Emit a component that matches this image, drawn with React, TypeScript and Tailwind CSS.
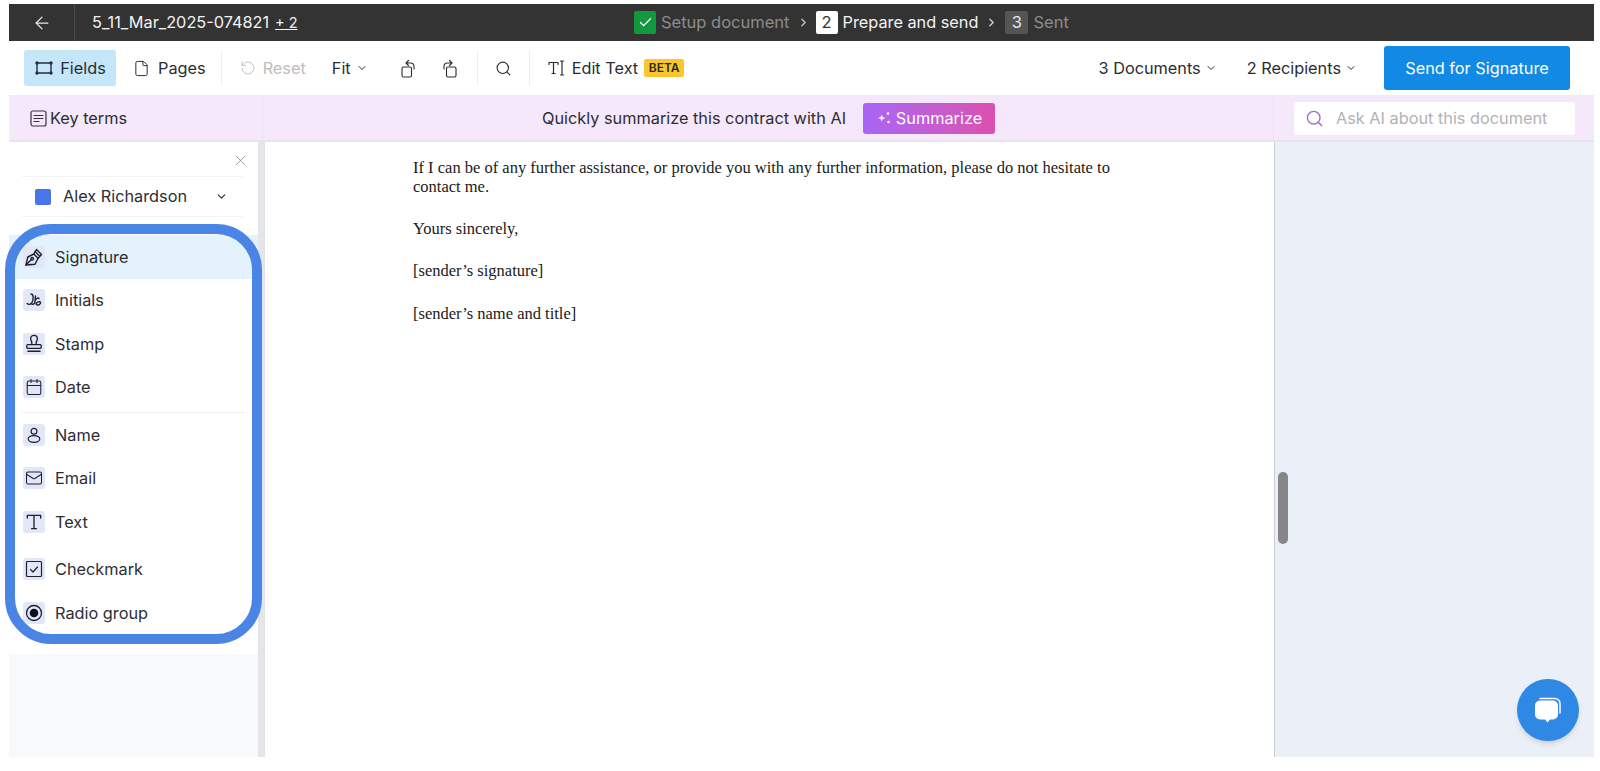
import React from "react";
import { ArrowLeft, Check, ChevronDown, ChevronRight, File, Search, RotateCw, X, Calendar, Mail } from "lucide-react";

const IconBox = ({ children }: { children: React.ReactNode }) => (
  <span className="w-[22px] h-[22px] rounded-[3px] bg-[#e2e7f8] flex items-center justify-center text-[#1d2030] shrink-0">{children}</span>
);

const svgProps = { fill: "none", stroke: "currentColor", strokeWidth: 1.4, strokeLinecap: "round" as const, strokeLinejoin: "round" as const };

const PenIcon = () => (
  <svg width="20" height="20" viewBox="0 0 20 20" {...svgProps}>
    <path d="M2 18l1.800-8 6-3 4.200 4.200-3 6z" />
    <path d="M9.800 7L12.500 2.500 17.500 7.500 14 11.200" />
    <path d="M2 18l5.200-5.200" />
    <circle cx="8.200" cy="11.800" r="1.300" />
    <path d="M11 4.500l4.500 4.500" />
  </svg>
);
const InitialsIcon = () => (
  <svg width="18" height="18" viewBox="0 0 18 18" {...svgProps}>
    <path d="M6 3c3 0 2.500 6 1 8.500C6 13.500 3.500 14 2.200 12.500" />
    <path d="M6 12.500c2 1.500 3.500.5 4-1.500L10.500 5" />
    <path d="M10.500 9c1-2 3-2.500 3.500-1.500M11 13c.5-2 4-3 4.500-1.500S13 15 11.500 13.500" />
  </svg>
);
const StampIcon = () => (
  <svg width="20" height="20" viewBox="0 0 18 18" {...svgProps} strokeWidth={1.2}>
    <path d="M7 9.500V7.500C7 6.500 6 6 6 4.200a3 3 0 0 1 6 0C12 6 11 6.500 11 7.500v2" />
    <rect x="2.500" y="9.500" width="13" height="3.500" rx="1" />
    <path d="M3.500 15.500h11" />
  </svg>
);
const UserIcon = () => (
  <svg width="18" height="18" viewBox="0 0 18 18" {...svgProps} strokeWidth={1.2}>
    <circle cx="9" cy="5.200" r="2.900" />
    <ellipse cx="9" cy="13" rx="5.800" ry="3.400" />
  </svg>
);
const SerifT = ({ size = 18 }: { size?: number }) => (
  <svg width={size} height={size} viewBox="0 0 18 18" {...svgProps} strokeWidth={1.2}>
    <path d="M3 5.500V3h12v2.500M9 3v12M6.800 15h4.400" />
  </svg>
);
const CheckBoxIcon = () => (
  <svg width="18" height="18" viewBox="0 0 18 18" {...svgProps} strokeWidth={1.2}>
    <rect x="1.500" y="1.500" width="15" height="15" rx="1" />
    <path d="M5.500 9.500l2.500 2.500 4.500-5" />
  </svg>
);
const RadioIcon = () => (
  <svg width="18" height="18" viewBox="0 0 18 18">
    <circle cx="9" cy="9" r="7.500" fill="none" stroke="currentColor" strokeWidth="1.3" />
    <circle cx="9" cy="9" r="4.300" fill="#0b0d17" />
  </svg>
);
const FieldsIcon = () => (
  <svg width="20" height="14" viewBox="0 0 20 14" {...svgProps} stroke="#26303c">
    <path d="M3 2h14M3 12h14M3 2v10M17 2v10" />
    <circle cx="3" cy="2" r="1" fill="#26303c" />
    <circle cx="17" cy="2" r="1" fill="#26303c" />
    <circle cx="3" cy="12" r="1" fill="#26303c" />
    <circle cx="17" cy="12" r="1" fill="#26303c" />
  </svg>
);
const RotateLeftIcon = () => (
  <svg width="15" height="19" viewBox="0 0 15 19" {...svgProps} strokeWidth={1.1}>
    <rect x="1" y="8" width="9.500" height="10" rx="1.500" />
    <path d="M5.500 4h4a3.500 3.500 0 0 1 3.500 3.500V10M7.500 1.500L5 4l2.500 2.500" />
  </svg>
);
const RotateRightIcon = () => (
  <svg width="15" height="19" viewBox="0 0 15 19" {...svgProps} strokeWidth={1.1}>
    <rect x="4.500" y="8" width="9.500" height="10" rx="1.500" />
    <path d="M9.500 4h-4A3.500 3.500 0 0 0 2 7.500V10M7.500 1.500L10 4 7.500 6.500" />
  </svg>
);
const EditTextIcon = () => (
  <svg width="18" height="18" viewBox="0 0 18 18" {...svgProps} strokeWidth={1.2} stroke="#2a2d33">
    <path d="M1 5.500V3.500h9v2M5.500 3.500v11M4 14.500h3M12.500 2h3M12.500 16h3M14 2v14" />
  </svg>
);
const KeyIcon = () => (
  <svg width="17" height="17" viewBox="0 0 17 17" {...svgProps} strokeWidth={1.2} stroke="#3a3045">
    <rect x="1" y="1" width="15" height="15" rx="2" />
    <path d="M4 5.500h9M4 8.500h9M4 11.500h5" />
  </svg>
);
const Sparkle = () => (
  <svg width="16" height="16" viewBox="0 0 14 14" fill="#fff">
    <path d="M5 3.500C5.400 6 6 6.600 8.500 7 6 7.400 5.400 8 5 10.500 4.600 8 4 7.400 1.500 7 4 6.600 4.600 6 5 3.500z" />
    <circle cx="10.500" cy="3" r="1.100" />
    <circle cx="11" cy="10.500" r="1.100" />
  </svg>
);
const ChatIcon = () => (
  <svg width="34" height="34" viewBox="0 0 34 34">
    <path d="M9 5.500h15a5 5 0 0 1 5 5V20" fill="none" stroke="#fff" strokeWidth="1.500" strokeLinecap="round" />
    <path d="M9 7.500h13a5 5 0 0 1 5 5v9a5 5 0 0 1-5 5h-3l-2.500 3-2.500-3H9a5 5 0 0 1-5-5v-9a5 5 0 0 1 5-5z" fill="#fff" />
  </svg>
);

const Divider = ({ className }: { className: string }) => <span className={`w-px h-[36px] bg-[#eceef1] shrink-0 ${className}`} />;

const Field = ({ icon, label, className = "" }: { icon: React.ReactNode; label: string; className?: string }) => (
  <div className={`h-[43.500px] flex items-center pl-[14px] gap-[10px] text-[16.300px] text-[#2c2e33] ${className}`}>
    <IconBox>{icon}</IconBox>
    <span>{label}</span>
  </div>
);

export default function App() {
  return (
    <div className="w-[1600px] h-[771px] overflow-hidden bg-white pt-1 pl-[9px] pr-[6px] pb-[14px] flex flex-col font-['Inter',sans-serif] relative">
      {/* Dark bar */}
      <header className="h-[37px] shrink-0 bg-[#333333] flex items-center text-white">
        <div className="w-[66px] h-full border-r border-[#4a4a4a] flex items-center justify-center pl-[1px]">
          <ArrowLeft size={20} strokeWidth={1.5} className="text-[#e8e8e8]" />
        </div>
        <div className="ml-[17px] w-[542px] flex items-center text-[16.300px] text-[#f2f2f2] whitespace-nowrap">
          5_11_Mar_2025-074821<span className="underline ml-[6px] text-[14.500px]">+ 2</span>
        </div>
        <span className="w-[22px] h-[23px] bg-[#12983f] rounded-[2px] flex items-center justify-center">
          <Check size={15} strokeWidth={2} className="text-white" />
        </span>
        <span className="ml-[5px] text-[16.500px] text-[#8c8c8c] whitespace-nowrap">Setup document</span>
        <ChevronRight size={13} strokeWidth={2.4} className="ml-[7px] text-[#c4c4c4]" />
        <span className="ml-[6px] w-[22px] h-[23px] bg-white rounded-[2px] flex items-center justify-center text-[#333] text-[16.500px]">2</span>
        <span className="ml-[5px] text-[16.300px] text-[#f2f2f2] whitespace-nowrap">Prepare and send</span>
        <ChevronRight size={13} strokeWidth={2.4} className="ml-[7px] text-[#d5d5d5]" />
        <span className="ml-[7px] w-[23px] h-[23px] bg-[#555555] rounded-[2px] flex items-center justify-center text-[#e8e8e8] text-[16.500px]">3</span>
        <span className="ml-[5px] text-[16.500px] text-[#8c8c8c]">Sent</span>
      </header>

      {/* Toolbar */}
      <div className="h-[54px] shrink-0 bg-white flex items-center text-[16.300px] text-[#2a2d33] whitespace-nowrap">
        <button className="ml-[15px] w-[92px] h-[36px] rounded-[3px] bg-[#c5e5f8] flex items-center justify-center gap-[6px]">
          <FieldsIcon />
          <span>Fields</span>
        </button>
        <span className="ml-[17px] flex items-center gap-[8px]">
          <File size={17} strokeWidth={1.4} />
          <span>Pages</span>
        </span>
        <Divider className="ml-[15px]" />
        <span className="ml-[18px] flex items-center gap-[7px] text-[#bdbdbd]">
          <RotateCw size={16} strokeWidth={1.4} className="-scale-x-100" />
          <span>Reset</span>
        </span>
        <span className="ml-[26px] flex items-center gap-[5px]">
          Fit <ChevronDown size={12} strokeWidth={2} />
        </span>
        <span className="ml-[33px]"><RotateLeftIcon /></span>
        <span className="ml-[26px]"><RotateRightIcon /></span>
        <Divider className="ml-[20px]" />
        <Search size={17} strokeWidth={1.6} className="ml-[17px]" />
        <Divider className="ml-[17px]" />
        <span className="ml-[18px]"><EditTextIcon /></span>
        <span className="ml-[6px]">Edit Text</span>
        <span className="ml-[6px] w-[40px] h-[18px] rounded-[2px] bg-[#fbc62d] text-[12px] font-semibold text-[#2a2a1a] flex items-center justify-center">BETA</span>
        <span className="ml-auto flex items-center gap-[4px]">
          3 Documents <ChevronDown size={12} strokeWidth={2} />
        </span>
        <span className="ml-[30px] flex items-center gap-[4px]">
          2 Recipients <ChevronDown size={12} strokeWidth={2} />
        </span>
        <button className="ml-[27px] mr-[24px] w-[186px] h-[44px] rounded-[3px] bg-[#1289e4] text-white">Send for Signature</button>
      </div>

      {/* AI bar */}
      <div className="h-[47px] shrink-0 pt-[1px] bg-[#f4e8fa] border-b-2 border-[#e6e3ea] flex items-center text-[16.300px] text-[#2f2d33] whitespace-nowrap">
        <div className="w-[254px] h-full border-r border-[#ebe2f0] flex items-center pl-[21px] gap-[3px]">
          <KeyIcon />
          <span>Key terms</span>
        </div>
        <div className="ml-[279px] flex items-center">
          <span>Quickly summarize this contract with AI</span>
          <button className="ml-[17px] w-[132px] h-[31px] rounded-[3px] bg-gradient-to-r from-[#a865f5] to-[#dc4fb0] text-white flex items-center justify-center gap-[4px]">
            <Sparkle />
            <span>Summarize</span>
          </button>
        </div>
        <div className="ml-auto w-[321px] h-full border-l border-[#ebe2f0] flex items-center pl-[20px]">
          <div className="w-[281px] h-[33px] bg-white rounded-[3px] flex items-center pl-[11px] gap-[12px] text-[#b2b2b6]">
            <Search size={19} strokeWidth={1.8} className="text-[#9a6fd0]" />
            <span>Ask AI about this document</span>
          </div>
        </div>
      </div>

      {/* Main */}
      <div className="flex-1 min-h-0 flex">
        {/* Sidebar */}
        <aside className="w-[249px] shrink-0 bg-white flex flex-col">
          <div className="h-[81px] shrink-0 relative pl-[13px] pt-[34px]">
            <X size={17} strokeWidth={1.2} className="absolute right-[9px] top-[10px] text-[#8f8f8f]" />
            <div className="w-[221px] h-[41px] border-y border-[#f3f4f6] flex items-center pl-[13px] text-[16.300px] text-[#2c2e33]">
              <span className="w-[16px] h-[16px] rounded-[2px] bg-[#4a74ea]" />
              <span className="ml-[12px]">Alex Richardson</span>
              <ChevronDown size={13} strokeWidth={2} className="ml-[28px]" />
            </div>
          </div>
          <div className="relative">
            <div className="absolute -left-[4px] -right-[4px] top-[1px] -bottom-[9px] border-[10px] border-[#4a84e4] rounded-[46px] z-10" />
            <div className="bg-white pt-[12px]">
              <Field icon={<PenIcon />} label="Signature" className="bg-[#e3f2fd]" />
              <Field icon={<InitialsIcon />} label="Initials" />
              <Field icon={<StampIcon />} label="Stamp" />
              <Field icon={<Calendar size={18} strokeWidth={1.4} />} label="Date" />
              <div className="h-[4px] mx-[13px] border-b border-[#f0f1f3]" />
              <Field icon={<UserIcon />} label="Name" />
              <Field icon={<Mail size={18} strokeWidth={1.4} />} label="Email" />
              <Field icon={<SerifT size={20} />} label="Text" />
              <div className="h-[4px]" />
              <Field icon={<CheckBoxIcon />} label="Checkmark" />
              <Field icon={<RadioIcon />} label="Radio group" />
            </div>
          </div>
          <div className="flex-1 mt-[19px] bg-[#f8f9fb]" />
        </aside>
        <div className="w-[7px] shrink-0 bg-[#e4e5e8]" />

        {/* Document */}
        <main className="w-[1009px] shrink-0 bg-white pl-[148px] pt-[16px] font-['Liberation_Serif',serif] text-[16.500px] leading-[19px] text-[#1a1a1a]">
          <p className="w-[710px]">If I can be of any further assistance, or provide you with any further information, please do not hesitate to contact me.</p>
          <p className="mt-[23px]">Yours sincerely,</p>
          <p className="mt-[23px]">[sender’s signature]</p>
          <p className="mt-[24px]">[sender’s name and title]</p>
        </main>

        {/* Right panel */}
        <section className="flex-1 bg-[#ebf0f8] border-l border-[#c9ccd3] relative">
          <div className="absolute left-[3px] top-[330px] w-[10px] h-[72px] rounded-full bg-[#868686]" />
          <div className="absolute left-[242px] top-[537px] w-[62px] h-[62px] rounded-full bg-[#2e88e4] flex items-center justify-center shadow-md">
            <ChatIcon />
          </div>
        </section>
      </div>
    </div>
  );
}
